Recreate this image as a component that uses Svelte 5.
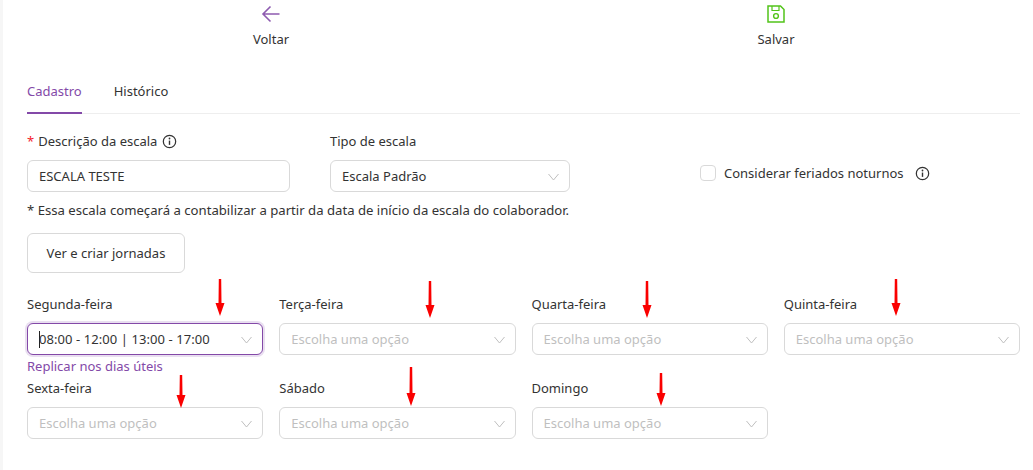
<script>
  const firstRow = [
    { day: 'Segunda-feira', value: '08:00 - 12:00 | 13:00 - 17:00', active: true },
    { day: 'Terça-feira' },
    { day: 'Quarta-feira' },
    { day: 'Quinta-feira' }
  ];
  const secondRow = [{ day: 'Sexta-feira' }, { day: 'Sábado' }, { day: 'Domingo' }];

  // red annotations drawn over the screenshot
  const arrows = [
    { x: 220, y: 279, h: 37 },
    { x: 430, y: 281, h: 37 },
    { x: 647, y: 281, h: 37 },
    { x: 896, y: 279, h: 37 },
    { x: 181, y: 375, h: 33 },
    { x: 411, y: 367, h: 39 },
    { x: 661, y: 373, h: 33 }
  ];
</script>

{#snippet chevron()}
  <svg class="chevron" width="11" height="8" viewBox="0 0 11 8" fill="none">
    <path d="M0.5 1 L5.5 7 L10.5 1" stroke="#bfbfbf" stroke-width="1" />
  </svg>
{/snippet}

{#snippet info(size)}
  <svg width={size} height={size} viewBox="0 0 16 16" fill="none">
    <circle cx="8" cy="8" r="6.6" stroke="#333" stroke-width="1.3" />
    <path d="M8 7 V11.6" stroke="#333" stroke-width="1.5" />
    <circle cx="8" cy="4.8" r="0.95" fill="#333" />
  </svg>
{/snippet}

{#snippet dayField(item)}
  <div class="field">
    <span class="label">{item.day}</span>
    <div class="select" class:active={item.active}>
      {#if item.value}
        <span class="caret"></span><span class="value time">{item.value}</span>
      {:else}
        <span class="placeholder">Escolha uma opção</span>
      {/if}
      {@render chevron()}
    </div>
  </div>
{/snippet}

<div class="page">
  <div class="content">
    <div class="toolbar">
      <button class="action">
        <svg width="20" height="18" viewBox="0 0 20 18" fill="none">
          <path d="M18.5 9 H2 M9.5 1.5 L2 9 L9.5 16.5" stroke="#8e5bb0" stroke-width="1.6" />
        </svg>
        <span class="action-text">Voltar</span>
      </button>
      <button class="action">
        <svg width="18" height="18" viewBox="0 0 18 18" fill="none">
          <path d="M1 1 H13.5 L17 4.5 V17 H1 Z" stroke="#52c41a" stroke-width="1.5" />
          <path d="M5 1 V5.5 H12 V1" stroke="#52c41a" stroke-width="1.2" />
          <circle cx="9" cy="11" r="2.4" stroke="#52c41a" stroke-width="1.4" />
        </svg>
        <span class="action-text">Salvar</span>
      </button>
    </div>

    <div class="tabs">
      <span class="tab current">Cadastro</span>
      <span class="tab">Histórico</span>
    </div>

    <div class="top-row">
      <div class="field desc">
        <span class="label"><span class="req">*</span><span class="desc-text">Descrição da escala</span>{@render info(15)}</span>
        <div class="select"><span class="value">ESCALA TESTE</span></div>
      </div>
      <div class="field kind">
        <span class="label">Tipo de escala</span>
        <div class="select"><span class="value">Escala Padrão</span>{@render chevron()}</div>
      </div>
      <div class="holiday">
        <span class="checkbox"></span>
        <span class="holiday-text">Considerar feriados noturnos</span>
        {@render info(15)}
      </div>
    </div>

    <p class="note">* Essa escala começará a contabilizar a partir da data de início da escala do colaborador.</p>

    <button class="journeys">Ver e criar jornadas</button>

    <div class="days first">
      {#each firstRow as item}
        {@render dayField(item)}
      {/each}
    </div>
    <a class="replicate" href="#top">Replicar nos dias úteis</a>
    <div class="days">
      {#each secondRow as item}
        {@render dayField(item)}
      {/each}
    </div>
  </div>

  {#each arrows as a}
    <svg class="arrow" width="12" height={a.h} viewBox="0 0 12 {a.h}" style="left: {a.x - 9}px; top: {a.y}px">
      <path d="M4.8 0 H7.2 L7.5 {a.h - 13} H10.5 L6 {a.h} L1.5 {a.h - 13} H4.5 Z" fill="#fa0000" />
    </svg>
  {/each}
</div>

<style>
  :global(body) {
    margin: 0;
    background: #fff;
  }

  .page {
    position: relative;
    height: 470px;
    overflow: hidden;
    border-left: 3px solid #f6f6f6;
    font-family: "Noto Sans", sans-serif;
    font-size: 13px;
    color: #333;
  }

  .content {
    width: 993px;
    margin-left: 24px;
  }

  .toolbar {
    display: grid;
    grid-template-columns: 505px 505px;
    margin-left: -9px;
    padding-top: 5px;
  }

  .action {
    display: flex;
    flex-direction: column;
    align-items: center;
    gap: 7px;
    padding: 0;
    border: none;
    background: none;
    font: inherit;
    color: #333;
  }

  .action-text {
    padding-left: 1px;
  }

  .tabs {
    display: flex;
    gap: 32px;
    margin-top: 33px;
    border-bottom: 1px solid #eee;
  }

  .tab {
    padding-bottom: 12px;
    line-height: 20px;
    margin-bottom: -1px;
  }

  .tab.current {
    color: #8349a8;
    border-bottom: 2px solid #8349a8;
    padding-bottom: 11px;
  }

  .top-row {
    display: flex;
    align-items: flex-start;
    margin-top: 17px;
  }

  .field {
    display: flex;
    flex-direction: column;
    gap: 9px;
    min-width: 0;
  }

  .desc {
    width: 263px;
    margin-right: 40px;
  }

  .kind {
    width: 240px;
    margin-right: 130px;
  }

  .label {
    display: flex;
    align-items: center;
    line-height: 20px;
    white-space: pre;
  }

  .req {
    color: #f5222d;
  }

  .desc-text {
    margin: 0 5px 0 4px;
  }

  .select {
    position: relative;
    display: flex;
    align-items: center;
    box-sizing: border-box;
    height: 32px;
    padding: 0 11px;
    border: 1px solid #d9d9d9;
    border-radius: 6px;
    background: #fff;
  }

  .select.active {
    border-color: #8349a8;
    box-shadow: 0 0 0 2px #e9dff0;
  }

  .caret {
    width: 1px;
    height: 17px;
    margin-right: -1px;
    background: #222;
  }

  .time {
    letter-spacing: 0.07px;
  }

  .placeholder {
    color: #bfbfbf;
  }

  .chevron {
    position: absolute;
    right: 10px;
    top: 12px;
  }

  .holiday {
    display: flex;
    align-items: center;
    margin-top: 33px;
  }

  .checkbox {
    box-sizing: border-box;
    width: 16px;
    height: 16px;
    margin-right: 8px;
    border: 1px solid #d9d9d9;
    border-radius: 4px;
  }

  .holiday-text {
    margin-right: 11px;
  }

  .note {
    margin: 8px 0 0;
    line-height: 20px;
    font-size: 13.15px;
  }

  .journeys {
    display: block;
    width: 158px;
    height: 40px;
    margin-top: 13px;
    padding: 0;
    border: 1px solid #d9d9d9;
    border-radius: 6px;
    background: #fff;
    font: inherit;
    color: #333;
  }

  .days {
    display: grid;
    grid-template-columns: repeat(4, 1fr);
    gap: 16px;
  }

  .days.first {
    margin-top: 21px;
  }

  .replicate {
    display: block;
    margin: 1px 0 2px;
    line-height: 20px;
    color: #8349a8;
    text-decoration: none;
  }

  .arrow {
    position: absolute;
  }
</style>
